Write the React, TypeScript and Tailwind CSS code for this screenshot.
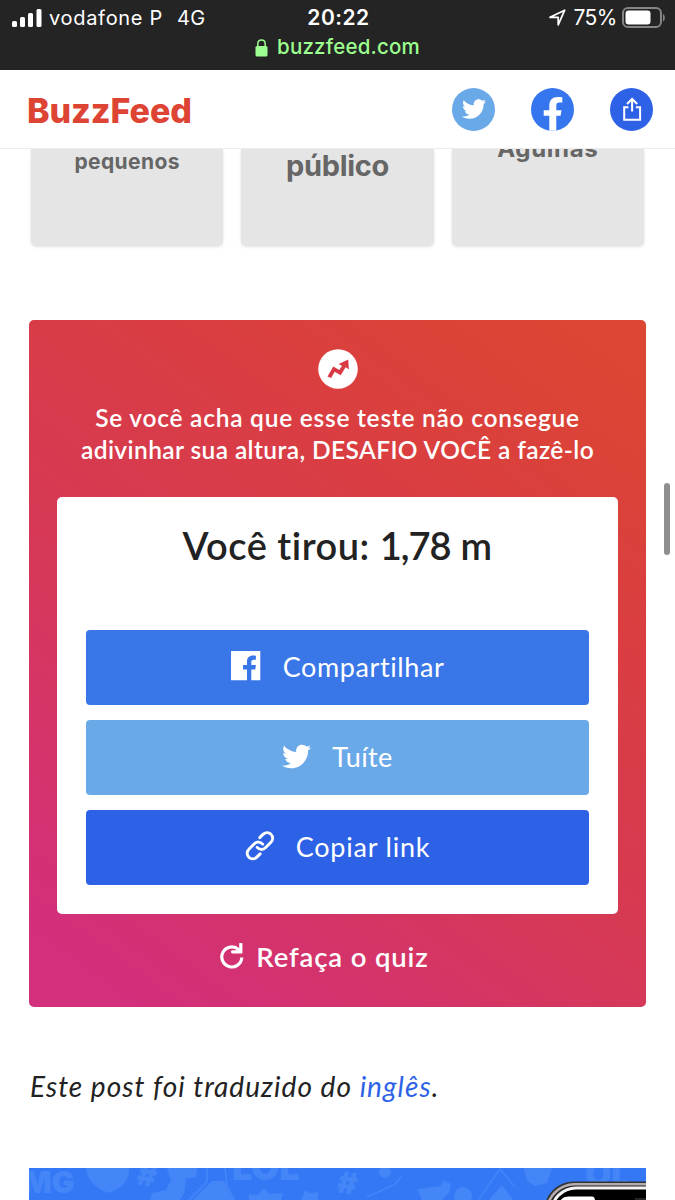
import { FaTwitter } from "react-icons/fa";

const RESULT_CARDS = [
  { label: "pequenos", className: "text-[21px] leading-[25px] tracking-[0.4px]" },
  { label: "público", className: "text-[29px] leading-[34px] tracking-[-0.3px]" },
  { label: "Agulhas", className: "text-[24px] leading-[28px] -mt-3.5 tracking-[0.7px]" },
];

function FacebookCircle() {
  return (
    <svg viewBox="0 0 43 43" className="size-[43px]">
      <circle cx="21.5" cy="21.5" r="21.5" fill="#3575ee" />
      <path
        fill="#fff"
        d="M18.3 42.8V27.7h-5.6v-5.5h5.6v-4.4c0-5.6 3.2-8.8 8.3-8.8 1.8 0 3.4.1 4.7.3v5.3h-2.9c-2.3 0-3.1 1.2-3.1 3v4.6h5.2l-.9 5.5h-4.3v15.1z"
      />
    </svg>
  );
}

function ShareCircle() {
  return (
    <svg viewBox="0 0 43 43" className="size-[43px]" fill="none">
      <circle cx="21.5" cy="21.5" r="21.5" fill="#2d62e6" />
      <path
        stroke="#fff"
        strokeWidth="2"
        d="M18.4 19.3h-4.2v12.4h15.9V19.3h-4.2M22.1 23.5V11.6M17 16l5.1-5 5.1 5"
      />
    </svg>
  );
}

function FacebookSquare() {
  return (
    <svg viewBox="0 0 30 30" className="-mt-[3px] size-[30px]">
      <path
        fill="#fff"
        d="M0 0h29.3v29.3h-9V18.4h4l.6-4.3h-4.6v-2.8c0-1.7.6-2.6 2.4-2.6h2.2V4.8c-.8-.1-1.8-.2-2.9-.2-3.7 0-6 2.1-6 6.1v3.4H12v4.3h4v10.9H0z"
      />
    </svg>
  );
}

function LinkIcon() {
  return (
    <svg viewBox="0 0 30 30" className="-mt-[3px] size-[30px]" fill="none" stroke="#fff" strokeWidth="2.9" strokeLinecap="round">
      <path d="M14.7 6.6l3-3c2.3-2.3 5.8-2.5 8.2-.4 2.4 2.2 2.3 5.8 0 8.1l-5.4 5.4c-2.4 2.4-6.2 2.3-8.4-.3" />
      <path d="M15.1 22.9l-3 3c-2.3 2.3-5.8 2.5-8.2.4-2.4-2.2-2.3-5.8 0-8.1l5.4-5.4c2.4-2.4 6.2-2.3 8.4.3" />
    </svg>
  );
}

function RetryIcon() {
  return (
    <svg viewBox="0 0 24 26" className="-mt-[3px] h-[26px] w-6" fill="none" stroke="#fff" strokeWidth="3.2">
      <path d="M18.6 6.6A10 10 0 1 0 21.8 14.5" />
      <path d="M12.5 8.800h8.300V1" strokeLinecap="round" />
      <path d="M15 8.800l5.800-5v5z" fill="#fff" stroke="none" />
    </svg>
  );
}

function TrendingBadge() {
  return (
    <svg viewBox="0 0 40 40" className="size-10">
      <circle cx="20" cy="20" r="19.8" fill="#fff" />
      <path fill="#d93a44" d="M9.500 27.400l5.800-9.900 6 3.600 2.700-4.200-3.300-2 9.500-4.500.7 9.900-3.300-2-4.900 8-6-3.500-3.600 6.200z" />
    </svg>
  );
}

function StatusBar() {
  return (
    <header className="h-[70px] shrink-0 bg-[#242424] pt-[5px] font-[Inter,sans-serif] text-white">
      <div className="grid h-[25px] grid-cols-3 items-center pr-[10px] pl-3 text-[19px]">
        <div className="flex items-center whitespace-nowrap">
          <svg viewBox="0 0 30 20" className="-mt-0.5 h-5 w-[30px]" fill="#fff">
            <rect x="0" y="13" width="5" height="6" rx="1.5" />
            <rect x="8" y="9" width="5" height="10" rx="1.5" />
            <rect x="16" y="5" width="5" height="14" rx="1.5" />
            <rect x="24.5" y="1" width="5" height="18" rx="1.5" />
          </svg>
          <span className="-mt-[3px] ml-[7px] text-[20px] tracking-[0.7px]">vodafone P</span>
          <span className="-mt-[3px] ml-[14px] text-[20px] tracking-[0.3px]">4G</span>
        </div>
        <div className="-mt-[3px] text-center text-[21px] font-semibold tracking-[0.5px]">20:22</div>
        <div className="flex items-center justify-end">
          <svg viewBox="0 0 17 17" className="-mt-[3px] mr-[7px] size-[17px]" fill="none" stroke="#fff" strokeWidth="1.7" strokeLinejoin="round">
            <path d="M1 8.3L15.7 1.2 9.2 15.8V8.3z" />
          </svg>
          <span className="-mt-[3px] text-[21px] tracking-[-0.5px]">75%</span>
          <svg viewBox="0 0 44 22" className="-mt-[3px] ml-1 h-[22px] w-[44px]">
            <rect x="2" y="1" width="38" height="19" rx="5" fill="none" stroke="#858585" strokeWidth="2" />
            <rect x="4.5" y="3.5" width="25" height="14" rx="3" fill="#fff" />
            <path d="M42 7c2.4 1 2.4 6.500 0 7.500z" fill="#858585" />
          </svg>
        </div>
      </div>
      <div className="flex h-[35px] items-center justify-center gap-[9px] text-[20.5px] font-medium tracking-[0.2px] text-[#9dff8f]">
        <svg viewBox="0 0 13 18" className="h-[18px] w-[13px]">
          <rect x="0.5" y="7" width="12" height="10.5" rx="1.5" fill="#9dff8f" />
          <path d="M2.8 8V5c0-5.2 7.4-5.2 7.4 0v3" fill="none" stroke="#9dff8f" strokeWidth="1.5" />
        </svg>
        <span>buzzfeed.com</span>
      </div>
    </header>
  );
}

function SiteHeader() {
  return (
    <nav className="flex h-[79px] shrink-0 items-center justify-between border-b border-[#ececec] bg-white pr-[22px] pl-[27px]">
      <span className="pt-[3px] font-[Inter,sans-serif] text-[34px] font-extrabold tracking-[-0.05px] text-[#dd4434]">
        BuzzFeed
      </span>
      <div className="flex items-center gap-9">
        <div className="flex size-[43px] items-center justify-center rounded-full bg-[#6aa9e8] text-white">
          <FaTwitter size={24} />
        </div>
        <FacebookCircle />
        <ShareCircle />
      </div>
    </nav>
  );
}

function QuizResult() {
  return (
    <section className="mx-[29px] mt-[74px] flex h-[687px] shrink-0 flex-col items-center rounded-[5px] bg-[linear-gradient(36deg,#d22f7c_7%,#d63953_45%,#da3e40_72%,#dc4632_96%)] px-[28px] pt-[29px] text-white">
      <TrendingBadge />
      <p className="mt-[13px] text-center text-[24.5px] leading-8 font-semibold whitespace-nowrap">
        <span className="tracking-[0.75px]">Se você acha que esse teste não consegue</span>
        <br />
        <span className="tracking-[0.4px]">adivinhar sua altura, DESAFIO VOCÊ a fazê-lo</span>
      </p>
      <div className="mt-[31px] h-[417px] w-full rounded-[5px] bg-white px-[29px] pt-[26px]">
        <h2 className="text-center text-[38px] leading-[44px] font-semibold tracking-[0.5px] text-[#222]">
          Você tirou: <span className="tracking-[-1px]">1,78</span> m
        </h2>
        <div className="mt-[63px] flex flex-col gap-[15px] text-[27px]">
          <button className="flex h-[75px] items-center justify-center gap-[22px] rounded-[4px] bg-[#3976e8]">
            <FacebookSquare />
            <span className="tracking-[0.6px]">Compartilhar</span>
          </button>
          <button className="flex h-[75px] items-center justify-center gap-[21px] rounded-[4px] bg-[#6aa9e8]">
            <FaTwitter size={29} className="-mt-[3px]" />
            <span className="tracking-[0.4px]">Tuíte</span>
          </button>
          <button className="flex h-[75px] items-center justify-center gap-[21px] rounded-[4px] bg-[#2d62e6]">
            <LinkIcon />
            <span className="tracking-[0.8px]">Copiar link</span>
          </button>
        </div>
      </div>
      <button className="mt-[25px] mr-[26px] flex items-center gap-[12px] text-[27.5px] leading-9 font-semibold tracking-[0.85px]">
        <RetryIcon />
        <span>Refaça o quiz</span>
      </button>
    </section>
  );
}

function PromoBanner() {
  return (
    <svg viewBox="0 0 617 33" className="ml-[29px] h-[33px] w-[617px] shrink-0">
      <rect width="617" height="33" fill="#3478f6" />
      <g fill="#4486f8" fontFamily="Inter, sans-serif" fontWeight="900">
        <text x="-6" y="25" fontSize="30">MG</text>
        <path d="M57 0h43c1 12-8 21-20 25C66 20 58 12 57 0z" />
        <text x="108" y="18" fontSize="29" transform="rotate(12 118 10)">#</text>
        <path d="M138 0h30l-1 9-11 2c1 10-1 17-6 22h-29l2-8 14-3 5-10z" />
        <path d="M163 33l20-20h12l10 20z" />
        <text x="203" y="12" fontSize="36">LOL</text>
        <path d="M220 33v-7l9 1 6-7 5 6 14-1-2 8zM272 33l4-11 5 3 8-1v9z" />
        <text x="308" y="26" fontSize="30" transform="rotate(8 320 20)">#</text>
        <circle cx="356" cy="4" r="6" />
        <path d="M388 21l24-3 2-6 8 4-2 9-11 11h-14z" />
        <circle cx="434" cy="28" r="9" />
        <path d="M459 33l14-16 12 16zM495 0h28l-5 15-12 3-8-5z" />
        <text x="556" y="18" fontSize="34">OL</text>
      </g>
      <path
        d="M178 0v14l-19 19M196 0l2 17 8 16M338 29l27-12 8-9M450 31l21-30 15 18"
        fill="none"
        stroke="#4486f8"
        strokeWidth="1.5"
      />
      <rect x="515" y="13.5" width="150" height="60" rx="30" fill="#333" />
      <rect x="516.5" y="15" width="150" height="60" rx="29" fill="#b5adac" />
      <rect x="519" y="17.5" width="150" height="60" rx="27" fill="#222" />
      <rect x="521" y="18.5" width="150" height="60" rx="26" fill="#f4f4f4" />
      <rect x="524" y="21.500" width="150" height="60" rx="23" fill="#000" />
      <path d="M531 33c2-3 5-4.500 9-4.500h23q3 0 3 4.500z" fill="#fff" />
      <rect x="606" y="30" width="11" height="3" fill="#252525" />
    </svg>
  );
}

export default function App() {
  return (
    <div className="relative flex h-[1200px] w-[675px] flex-col overflow-hidden bg-white font-[Lato,sans-serif]">
      <StatusBar />
      <SiteHeader />

      {/* Bottom of the answer grid, cut off by the header */}
      <div className="grid h-[97px] shrink-0 grid-cols-3 gap-[18px] px-[31px] [clip-path:inset(0_0_-4px_0)]">
        {RESULT_CARDS.map((card) => (
          <div
            key={card.label}
            className="h-[97px] rounded-b-[5px] bg-[#e5e5e5] text-center font-[Inter,sans-serif] font-bold text-[#666] shadow-[0_1px_3px_rgba(0,0,0,0.12)]"
          >
            <div className={card.className}>{card.label}</div>
          </div>
        ))}
      </div>

      <QuizResult />

      <p className="mt-[61px] mb-[63.5px] ml-[30px] h-9 shrink-0 text-[28px] leading-9 tracking-[1.05px] whitespace-nowrap text-[#222] italic">
        Este post foi traduzido do <a className="text-[#2d62e6]">inglês</a>.
      </p>

      <PromoBanner />

      {/* Page scroll indicator */}
      <div className="absolute top-[483px] right-[5px] h-[72px] w-[6px] rounded-full bg-[#8f8f8f]" />
    </div>
  );
}
